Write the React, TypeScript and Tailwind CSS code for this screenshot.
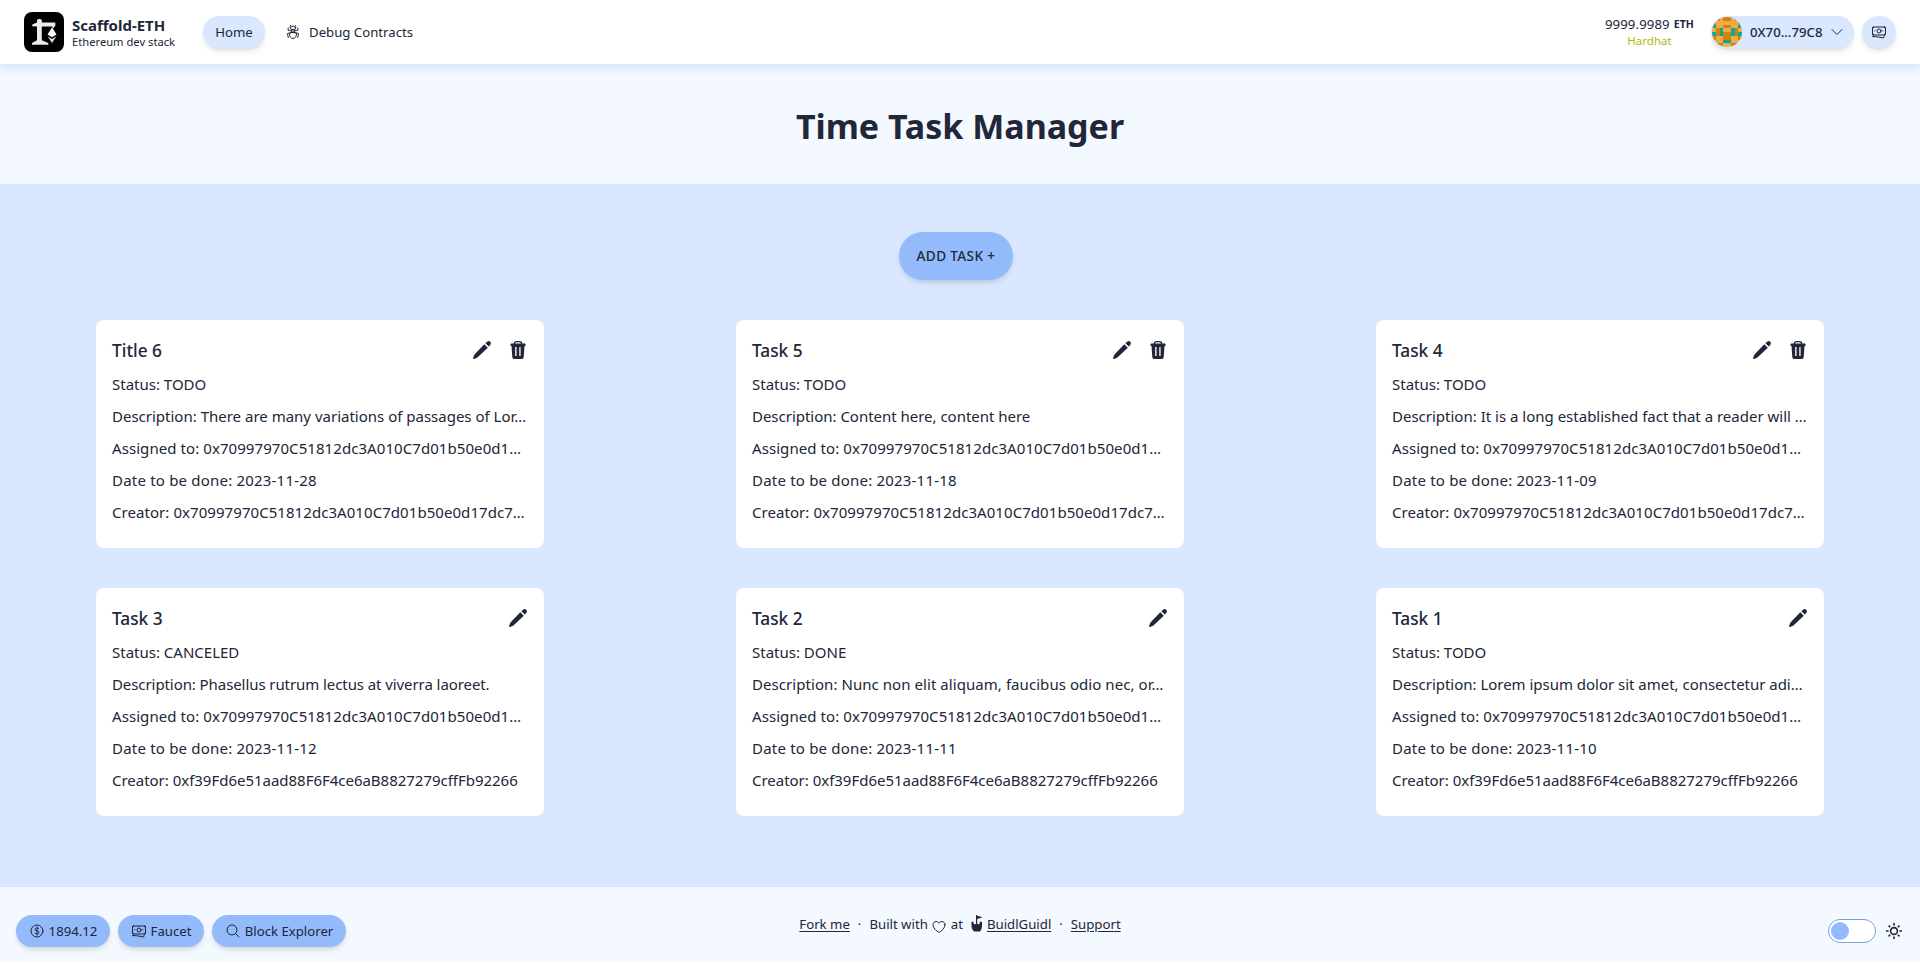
import React from "react";
import {
  HiOutlineBugAnt, HiOutlineChevronDown, HiOutlineBanknotes,
  HiOutlineCurrencyDollar, HiOutlineMagnifyingGlass, HiOutlineHeart,
} from "react-icons/hi2";

const ADDR = "0x70997970C51812dc3A010C7d01b50e0d1…";
const CREATOR_A = "0x70997970C51812dc3A010C7d01b50e0d17dc7…";
const CREATOR_B = "0xf39Fd6e51aad88F6F4ce6aB8827279cffFb92266";

type Task = {
  title: string; status: string; description: string; date: string; creator: string;
  removable: boolean; tracking: string;
};

const tasks: Task[] = [
  { title: "Title 6", status: "TODO", description: "There are many variations of passages of Lor…", date: "2023-11-28", creator: CREATOR_A, removable: true, tracking: "tracking-normal" },
  { title: "Task 5", status: "TODO", description: "Content here, content here", date: "2023-11-18", creator: CREATOR_A, removable: true, tracking: "tracking-[-0.02px]" },
  { title: "Task 4", status: "TODO", description: "It is a long established fact that a reader will …", date: "2023-11-09", creator: CREATOR_A, removable: true, tracking: "tracking-normal" },
  { title: "Task 3", status: "CANCELED", description: "Phasellus rutrum lectus at viverra laoreet.", date: "2023-11-12", creator: CREATOR_B, removable: false, tracking: "tracking-[-0.08px]" },
  { title: "Task 2", status: "DONE", description: "Nunc non elit aliquam, faucibus odio nec, or…", date: "2023-11-11", creator: CREATOR_B, removable: false, tracking: "tracking-[0.06px]" },
  { title: "Task 1", status: "TODO", description: "Lorem ipsum dolor sit amet, consectetur adi…", date: "2023-11-10", creator: CREATOR_B, removable: false, tracking: "tracking-[-0.02px]" },
];

function Logo() {
  return (
    <svg viewBox="0 0 40 40" className="h-10 w-10">
      <rect width="40" height="40" rx="8" fill="#000" />
      <path d="M8.300 12.500L13 10.600V7.800L15.500 6.700L17.800 7.800V10.600H31.300V14.500H30V16H28.500V14.500H17.800V28.300L24.300 31V32.700H8V31L13 28.300V14.500L8.300 14.200z" fill="#ececec" />
      <path d="M28 15.300l4.500 7.200-4.500 2.700-4.500-2.700z" fill="#f4f4f4" />
      <path d="M23.600 24.200L28 27l4.400-2.800L28 31z" fill="#dcdcdc" />
    </svg>
  );
}

const AVATAR = ["aabaabaa", "abbbbbba", "cbbaabbc", "bacbbcab", "cacaacac", "abbaabba", "bbbccbbb", "aaabbaaa"];

function Avatar() {
  return (
    <svg viewBox="0 0 8 8" className="h-[30px] w-[30px] rounded-full" shapeRendering="crispEdges">
      {AVATAR.map((row, y) =>
        row.split("").map((c, x) => (
          <rect key={`${x}-${y}`} x={x} y={y} width="1" height="1" fill={c === "a" ? "#d1840b" : c === "b" ? "#f1a94e" : "#0ba894"} />
        )),
      )}
    </svg>
  );
}

function Pencil() {
  return (
    <svg viewBox="0 0 20 20" className="h-5 w-5" fill="currentColor">
      <path d="M12.300 4.200L15.800 7.700L5.700 17.200Q3.500 18.600 1.300 19Q.800 19 1 18.500Q1.500 15.800 2.900 13.900z" />
      <path d="M13.400 3.200L15 1.700Q16.800.400 18.300 1.700Q19.600 3.200 18.300 5L16.800 6.600z" />
    </svg>
  );
}

function Trash() {
  return (
    <svg viewBox="0 0 20 20" className="h-5 w-5">
      <path d="M6.300 4.200C6.300 2.200 7.300 1.700 8.500 1.700H11.500C12.700 1.700 13.700 2.200 13.700 4.200" fill="none" stroke="currentColor" strokeWidth="1.300" />
      <path fillRule="evenodd" fill="currentColor" d="M3.200 3.500H16.800Q17.500 3.500 17.500 4.300V5.400Q17.500 6 16.800 6H16.500L15.700 17.200Q15.500 19 13.900 19H6.100Q4.500 19 4.300 17.200L3.500 6H3.200Q2.500 6 2.500 5.400V4.300Q2.500 3.500 3.200 3.500zM7.200 7V16H8.500V7zM11.300 7V16H12.600V7z" />
    </svg>
  );
}

function Sun() {
  return (
    <svg viewBox="0 0 20 20" className="h-5 w-5" fill="none" stroke="currentColor" strokeWidth="1.600">
      <circle cx="10" cy="10" r="3.400" />
      <path d="M10 2v2.600M10 15.400V18M2 10h2.600M15.400 10H18M4.600 4.600l1.600 1.600M13.800 13.800l1.600 1.600M4.600 15.400l1.600-1.600M13.800 6.200l1.600-1.600" />
    </svg>
  );
}

function Card({ task }: { task: Task }) {
  return (
    <article className="h-[228px] w-[448px] rounded-lg bg-white p-4 text-[15px] leading-6 whitespace-nowrap">
      <div className="flex h-7 items-center justify-between">
        <h2 className="pt-0.5 text-[17.300px] font-medium">{task.title}</h2>
        <div className="flex items-center gap-4">
          <Pencil />
          {task.removable && <Trash />}
        </div>
      </div>
      <div className="mt-2 flex flex-col gap-2">
        <p>Status: {task.status}</p>
        <p className={task.tracking}>Description: {task.description}</p>
        <p className="tracking-[0.07px]">Assigned to: {ADDR}</p>
        <p className="tracking-[0.2px]">Date to be done: {task.date}</p>
        <p className={task.creator === CREATOR_A ? "tracking-[0.06px]" : "tracking-[-0.02px]"}>Creator: {task.creator}</p>
      </div>
    </article>
  );
}

function BuidlIcon() {
  return (
    <svg viewBox="0 0 12 17" className="h-[17px] w-3" fill="currentColor">
      <path d="M5 0h1l.2.700 5.300 1.600-5.300 1.600V8.700l1.300.800 1.200-1V6.800h2.300V11.500Q11 14 9 16.500H3Q.500 14 .500 11.500V6.800H2.500V8.500l1.300 1L5 8.700z" />
    </svg>
  );
}

export default function App() {
  return (
    <div className="flex h-[964px] w-[1920px] flex-col bg-white font-['Noto_Sans',sans-serif] text-[#212638]">
      <header className="relative z-10 flex h-16 shrink-0 items-center bg-white pr-6 pl-6 shadow-[0_4px_8px_rgba(147,187,251,0.35)]">
        <Logo />
        <div className="ml-2 flex w-[107px] flex-col pt-0.5 whitespace-nowrap">
          <span className="text-[15px] leading-[18px] font-bold">Scaffold-ETH</span>
          <span className="text-[11.200px] leading-4">Ethereum dev stack</span>
        </div>
        <nav className="ml-6 flex items-center text-[13.200px]">
          <a className="flex h-8 w-[62px] items-center justify-center rounded-full bg-[#dae8ff] pt-px shadow-md">Home</a>
          <a className="ml-5 flex items-center gap-2 whitespace-nowrap"><HiOutlineBugAnt className="h-4 w-4" /><span className="pt-px">Debug Contracts</span></a>
        </nav>
        <div className="ml-auto flex items-center">
          <div className="mr-[17px] flex flex-col items-center pt-px whitespace-nowrap">
            <span className="flex items-center gap-1 text-[13.200px] leading-4 tracking-[0.1px]">9999.9989 <b className="text-[10.500px] font-bold">ETH</b></span>
            <span className="text-[11.500px] leading-[17px] text-[#b6b50c]">Hardhat</span>
          </div>
          <div className="flex h-8 w-[143px] items-center rounded-full bg-[#dae8ff] pl-px text-[13.200px] font-medium shadow-md">
            <Avatar />
            <span className="ml-2 pt-px">0X70...79C8</span>
            <HiOutlineChevronDown className="ml-[7px] h-4 w-4" />
          </div>
          <div className="ml-2 flex h-8 w-[34px] items-center justify-center rounded-full bg-[#dae8ff] shadow-md"><HiOutlineBanknotes className="h-4 w-4" /></div>
        </div>
      </header>
      <section className="flex h-[120px] shrink-0 items-center justify-center bg-[#f4f8ff]">
        <h1 className="mt-1 text-[34px] font-bold">Time Task Manager</h1>
      </section>
      <main className="flex h-[703px] shrink-0 flex-col items-center bg-[#dae8ff] pt-12">
        <button className="mr-2 flex h-12 w-[114px] items-center justify-center rounded-full bg-[#93bbfb] pt-px text-[13.600px] font-medium tracking-[0.35px] shadow-md">ADD TASK +</button>
        <div className="mt-10 grid w-full grid-cols-3 justify-items-center gap-y-10">
          {tasks.map((t) => <Card key={t.title} task={t} />)}
        </div>
      </main>
      <footer className="grid h-[75px] shrink-0 grid-cols-[1fr_auto_1fr] bg-[#f4f8ff] px-4 text-[13.200px] whitespace-nowrap">
        <div className="flex gap-2 pt-7">
          <div className="flex h-8 w-[94px] items-center justify-center gap-1 rounded-full bg-[#93bbfb] shadow-md"><HiOutlineCurrencyDollar className="h-4 w-4" /><span className="pt-px">1894.12</span></div>
          <div className="flex h-8 w-[86px] items-center justify-center gap-1 rounded-full bg-[#93bbfb] shadow-md"><HiOutlineBanknotes className="h-4 w-4" /><span className="pt-px">Faucet</span></div>
          <div className="flex h-8 w-[134px] items-center justify-center gap-1 rounded-full bg-[#93bbfb] shadow-md"><HiOutlineMagnifyingGlass className="h-4 w-4" /><span className="pt-px">Block Explorer</span></div>
        </div>
        <div className="mt-7 flex h-5 items-center gap-2">
          <a className="underline underline-offset-2">Fork me</a>
          <span>·</span>
          <div className="flex items-center">
            <span>Built with</span>
            <HiOutlineHeart className="mt-1 ml-[3px] h-4 w-4" />
            <span className="ml-1">at</span>
            <span className="mr-1 mb-1 ml-2"><BuidlIcon /></span>
            <a className="underline underline-offset-2">BuidlGuidl</a>
          </div>
          <span>·</span>
          <a className="underline underline-offset-2">Support</a>
        </div>
        <div className="flex items-center justify-end gap-2 pt-3">
          <div className="flex h-6 w-12 items-center rounded-full border border-[#7a9fdc] bg-white pl-0.5"><span className="h-[18px] w-[18px] rounded-full bg-[#93bbfb]" /></div>
          <Sun />
        </div>
      </footer>
    </div>
  );
}
